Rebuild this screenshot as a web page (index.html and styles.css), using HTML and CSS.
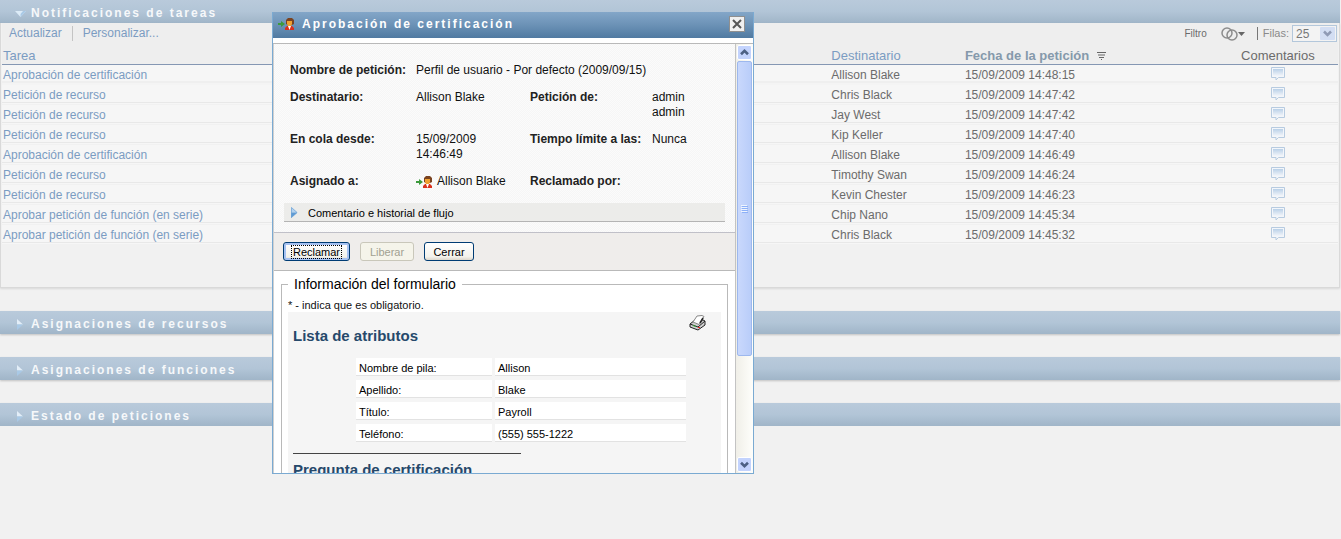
FILE: index.html
```
<!DOCTYPE html>
<html lang="es">
<head>
    <meta charset="UTF-8">
    <meta name="viewport" content="width=device-width, initial-scale=1.0">
    <title>Notificaciones de tareas</title>
    <link rel="stylesheet" href="styles.css">
</head>
<body>
    <!-- Iconos compartidos -->
    <svg class="sprite" aria-hidden="true">
        <defs>
            <linearGradient id="bubbleFill" x1="0" y1="0" x2="0" y2="1">
                <stop offset="0" stop-color="#b9d0e8"/>
                <stop offset="1" stop-color="#f3f6fa"/>
            </linearGradient>
        </defs>
        <symbol id="iconComment" viewBox="0 0 14 14">
            <path d="M.5 .5h13v10H7.500l-2.500 2.500v-2.500H.5z" fill="#f3f6fa" stroke="#b7cbe0"/>
            <rect x="2" y="2" width="10" height="7" fill="url(#bubbleFill)"/>
        </symbol>
        <symbol id="iconUser" viewBox="0 0 17 14">
            <path d="M0 6h3V4l4 3-4 3V8H0z" fill="#3c9a3c"/>
            <path d="M7 13v-2l2-2h5l2 2v2z" fill="#d8301c"/>
            <path d="M10 9h3l-1.500 4z" fill="#fff"/>
            <path d="M8 5V3l2-2h4l2 2v4l-2 1h-4l-2-1z" fill="#7a4320"/>
            <path d="M9 4h5v3l-1 2h-3l-1-2z" fill="#f0a030"/>
        </symbol>
        <symbol id="iconRight" viewBox="0 0 7 11">
            <path d="M0 0l6.500 5.500H0z" fill="#b3d2ef"/>
            <path d="M0 5.500h6.500L0 11z" fill="#5f9bd4"/>
            <path d="M.5 .5l5.500 5L.5 10.500z" fill="none" stroke="#6fa3d6" stroke-width=".7"/>
        </symbol>
    </svg>

    <main class="page">
        <section class="panel">
            <h2 class="panel-title">
                <svg class="panel-arrow" viewBox="0 0 11 11"><path d="M0 3h11L5.500 9z" fill="#dcebf7"/><path d="M5.500 9L11 3H8L5.500 6z" fill="#a9c9e6"/></svg>
                Notificaciones de tareas
            </h2>
            <div class="panel-body">
                <div class="toolbar">
                    <a href="#" class="tool-link">Actualizar</a>
                    <a href="#" class="tool-link">Personalizar...</a>
                    <div class="tool-right">
                        <span class="filter-label">Filtro</span>
                        <button class="filter-btn" type="button" aria-label="Filtro">
                            <svg width="25" height="14" viewBox="0 0 25 14">
                                <circle cx="6" cy="6" r="5" fill="none" stroke="#8c8c8c" stroke-width="1.500"/>
                                <circle cx="11" cy="8" r="5" fill="none" stroke="#8c8c8c" stroke-width="1.500"/>
                                <path d="M17 5h7l-3.500 4z" fill="#666"/>
                            </svg>
                        </button>
                        <label class="rows-label" for="rows">Filas:</label>
                        <span class="rows-box">
                            <select id="rows" class="rows-select">
                                <option>25</option>
                            </select>
                            <svg class="rows-arrow" viewBox="0 0 15 13"><rect width="15" height="13" rx="1" fill="#d3def3"/><path d="M4 4.500l3.500 3.500L11 4.500" fill="none" stroke="#909bb5" stroke-width="2.500"/></svg>
                        </span>
                    </div>
                </div>
                <table class="tasks">
                    <colgroup>
                        <col class="col-task">
                        <col class="col-to">
                        <col class="col-date">
                        <col class="col-comments">
                    </colgroup>
                    <thead>
                        <tr>
                            <th><a href="#">Tarea</a></th>
                            <th><a href="#">Destinatario</a></th>
                            <th class="sorted">Fecha de la petición
                                <svg class="sort-icon" width="9" height="8" viewBox="0 0 9 8"><path d="M0 .5h9M1 3h7M2 5.500h5M4 7.500h1" stroke="#666"/></svg>
                            </th>
                            <th class="center">Comentarios</th>
                        </tr>
                    </thead>
                    <tbody>
                        <tr><td><a href="#">Aprobación de certificación</a></td><td>Allison Blake</td><td>15/09/2009 14:48:15</td><td class="center"><svg class="comment"><use href="#iconComment"/></svg></td></tr>
                        <tr><td><a href="#">Petición de recurso</a></td><td>Chris Black</td><td>15/09/2009 14:47:42</td><td class="center"><svg class="comment"><use href="#iconComment"/></svg></td></tr>
                        <tr><td><a href="#">Petición de recurso</a></td><td>Jay West</td><td>15/09/2009 14:47:42</td><td class="center"><svg class="comment"><use href="#iconComment"/></svg></td></tr>
                        <tr><td><a href="#">Petición de recurso</a></td><td>Kip Keller</td><td>15/09/2009 14:47:40</td><td class="center"><svg class="comment"><use href="#iconComment"/></svg></td></tr>
                        <tr><td><a href="#">Aprobación de certificación</a></td><td>Allison Blake</td><td>15/09/2009 14:46:49</td><td class="center"><svg class="comment"><use href="#iconComment"/></svg></td></tr>
                        <tr><td><a href="#">Petición de recurso</a></td><td>Timothy Swan</td><td>15/09/2009 14:46:24</td><td class="center"><svg class="comment"><use href="#iconComment"/></svg></td></tr>
                        <tr><td><a href="#">Petición de recurso</a></td><td>Kevin Chester</td><td>15/09/2009 14:46:23</td><td class="center"><svg class="comment"><use href="#iconComment"/></svg></td></tr>
                        <tr><td><a href="#">Aprobar petición de función (en serie)</a></td><td>Chip Nano</td><td>15/09/2009 14:45:34</td><td class="center"><svg class="comment"><use href="#iconComment"/></svg></td></tr>
                        <tr><td><a href="#">Aprobar petición de función (en serie)</a></td><td>Chris Black</td><td>15/09/2009 14:45:32</td><td class="center"><svg class="comment"><use href="#iconComment"/></svg></td></tr>
                    </tbody>
                </table>
            </div>
        </section>

        <h2 class="panel-title closed">
            <svg class="panel-arrow" viewBox="0 0 11 11"><path d="M2 0l6 5.500H2z" fill="#e3eef8"/><path d="M2 5.500h6L2 11z" fill="#a9c9e6"/></svg>
            Asignaciones de recursos
        </h2>
        <h2 class="panel-title closed">
            <svg class="panel-arrow" viewBox="0 0 11 11"><path d="M2 0l6 5.500H2z" fill="#e3eef8"/><path d="M2 5.500h6L2 11z" fill="#a9c9e6"/></svg>
            Asignaciones de funciones
        </h2>
        <h2 class="panel-title closed">
            <svg class="panel-arrow" viewBox="0 0 11 11"><path d="M2 0l6 5.500H2z" fill="#e3eef8"/><path d="M2 5.500h6L2 11z" fill="#a9c9e6"/></svg>
            Estado de peticiones
        </h2>
    </main>

    <!-- Ventana de detalle de la tarea -->
    <div class="modal" role="dialog" aria-labelledby="modalTitle">
        <div class="modal-header">
            <svg class="user-icon"><use href="#iconUser"/></svg>
            <h1 class="modal-title" id="modalTitle">Aprobación de certificación</h1>
            <button class="close-btn" type="button" aria-label="Cerrar ventana">
                <svg width="10" height="10" viewBox="0 0 10 10"><path d="M1 1l8 8M9 1L1 9" stroke="#555" stroke-width="2"/></svg>
            </button>
        </div>
        <div class="modal-main">
            <div class="modal-content">
                <div class="detail">
                    <dl class="detail-grid">
                        <dt>Nombre de petición:</dt>
                        <dd class="wide">Perfil de usuario - Por defecto (2009/09/15)</dd>
                        <dt>Destinatario:</dt>
                        <dd>Allison Blake</dd>
                        <dt>Petición de:</dt>
                        <dd>admin<br>admin</dd>
                        <dt>En cola desde:</dt>
                        <dd>15/09/2009<br>14:46:49</dd>
                        <dt>Tiempo límite a las:</dt>
                        <dd>Nunca</dd>
                        <dt>Asignado a:</dt>
                        <dd class="with-icon"><svg class="user-icon"><use href="#iconUser"/></svg>Allison Blake</dd>
                        <dt>Reclamado por:</dt>
                        <dd></dd>
                    </dl>
                    <button class="history" type="button">
                        <svg class="history-arrow"><use href="#iconRight"/></svg>
                        Comentario e historial de flujo
                    </button>
                </div>

                <div class="actions">
                    <button class="btn btn-focus" type="button"><span class="btn-text">Reclamar</span></button>
                    <button class="btn btn-medium" type="button" disabled>Liberar</button>
                    <button class="btn" type="button">Cerrar</button>
                </div>

                <fieldset class="form-info">
                    <legend>Información del formulario</legend>
                    <p class="required">* - indica que es obligatorio.</p>
                    <div class="form-box">
                        <button class="print-btn" type="button" aria-label="Imprimir">
                            <svg width="17" height="16" viewBox="0 0 17 16">
                                <path d="M1 9l5-4h8l2 1v4l-7 5-8-3z" fill="#d0d0d0" stroke="#222"/>
                                <path d="M1 9l8 3 7-6" fill="none" stroke="#222"/>
                                <path d="M4 7l4-6 5-.500 2 1-5 8z" fill="#fff" stroke="#888"/>
                                <path d="M11 8l3-5" stroke="#222" stroke-width="1.500"/>
                                <path d="M4 10.500l3 1" stroke="#3a3"/>
                                <rect x="9" y="12" width="2" height="1" fill="#e22"/>
                            </svg>
                        </button>
                        <h3>Lista de atributos</h3>
                        <table class="attributes">
                            <tr><th scope="row">Nombre de pila:</th><td>Allison</td></tr>
                            <tr><th scope="row">Apellido:</th><td>Blake</td></tr>
                            <tr><th scope="row">Título:</th><td>Payroll</td></tr>
                            <tr><th scope="row">Teléfono:</th><td>(555) 555-1222</td></tr>
                        </table>
                        <hr>
                        <h3>Pregunta de certificación</h3>
                    </div>
                </fieldset>
            </div>
            <div class="scrollbar" aria-hidden="true">
                <svg class="scroll-btn" viewBox="0 0 15 15"><path d="M3.500 9.500L7.500 5.500l4 4" fill="none" stroke="#4d6185" stroke-width="3"/></svg>
                <div class="scroll-thumb">
                    <svg width="7" height="8" viewBox="0 0 7 8"><path d="M0 .5h6M0 2.500h6M0 4.500h6M0 6.500h6" stroke="#eef4fe"/><path d="M1 1.500h6M1 3.500h6M1 5.500h6M1 7.500h6" stroke="#8cb0f8"/></svg>
                </div>
                <svg class="scroll-btn scroll-down" viewBox="0 0 15 15"><path d="M3.500 5.500l4 4 4-4" fill="none" stroke="#4d6185" stroke-width="3"/></svg>
            </div>
        </div>
    </div>
</body>
</html>
```
FILE: styles.css
```
/* Estilos generales */
* {
    box-sizing: border-box;
}

body {
    margin: 0;
    background: #f1f1f1;
    font-family: "Liberation Sans", Arial, sans-serif;
    font-size: 12px;
    line-height: 15px;
    color: #6b6b6b;
}

a {
    color: #7b9cc2;
    text-decoration: none;
}

button {
    font-family: inherit;
    padding: 0;
}

svg {
    flex: none;
}

.sprite {
    position: absolute;
    width: 0;
    height: 0;
}

.page {
    margin-right: 1px;
}

/* Paneles */
.panel-title {
    display: flex;
    align-items: center;
    gap: 5px;
    height: 23px;
    margin: 0;
    padding: 3px 0 0 15px;
    background: linear-gradient(#b9cadb, #b2c5d7 50%, #a0b5c8);
    color: #f6f8fa;
    font-size: 12px;
    letter-spacing: 2px;
}

.panel-title.closed {
    margin-top: 23px;
    box-shadow: 0 1px 2px rgba(0, 0, 0, 0.2);
}

.panel-arrow {
    width: 11px;
    height: 11px;
}

.panel-body {
    min-height: 265px;
    border: 1px solid #d9d9d9;
    border-top: none;
    box-shadow: 0 1px 2px rgba(0, 0, 0, 0.1);
    margin-bottom: 23px;
    padding: 0 1px;
}

.toolbar {
    display: flex;
    align-items: center;
    height: 21px;
    background: #eeeeee;
}

.tool-link {
    padding: 0 10px 0 7px;
}

.tool-link + .tool-link {
    border-left: 1px solid #c4c4c4;
    padding-left: 10px;
}

.tool-right {
    display: flex;
    align-items: center;
    margin-left: auto;
    font-size: 11px;
}

.filter-btn {
    display: flex;
    margin: 0 11px 0 14px;
    border: none;
    background: none;
}

.filter-label {
    font-size: 10px;
}

.rows-label {
    border-left: 1px solid #777;
    padding: 0 3px 0 5px;
    line-height: 13px;
    color: #8a8a8a;
}

.rows-box {
    display: grid;
    align-items: center;
    width: 45px;
    height: 17px;
    margin-right: 1px;
    border: 1px solid #b3c7db;
    background: #f3f3f3;
}

.rows-select {
    grid-area: 1 / 1;
    width: 100%;
    appearance: none;
    border: none;
    background: none;
    padding: 0 3px;
    color: #777;
    font-family: inherit;
    font-size: 12px;
}

.rows-arrow {
    grid-area: 1 / 1;
    justify-self: end;
    width: 15px;
    height: 13px;
    margin-right: 1px;
    pointer-events: none;
}

/* Tabla de tareas */
.tasks {
    width: 100%;
    table-layout: fixed;
    border-collapse: collapse;
}

.col-task { width: 62%; }
.col-to { width: 10%; }
.col-date { width: 19%; }
.col-comments { width: 9%; }

.tasks th {
    height: 20px;
    padding: 3px 1px 0;
    border-bottom: 1px solid #8597b3;
    background: #eeeeee;
    font-size: 13px;
    font-weight: normal;
    text-align: left;
}

.tasks .sorted {
    color: #8599ab;
    font-weight: bold;
}

.sort-icon {
    margin-left: 4px;
}

.tasks td {
    height: 20px;
    padding: 2px 1px 0;
    background: linear-gradient(#f6f6f6 17px, #e8e8e8 17px, #e8e8e8 18px, #f6f6f6 18px, #f6f6f6 19px, #f1f1f1 19px);
}

.tasks .center {
    text-align: center;
}

.comment {
    display: block;
    width: 14px;
    height: 14px;
    margin: 0 auto 4px;
}

/* Ventana */
.modal {
    position: absolute;
    top: 12px;
    left: 272px;
    display: flex;
    flex-direction: column;
    width: 482px;
    height: 462px;
    border: 1px solid #7aaad2;
    border-top: none;
    background: #fff;
    color: #111;
}

.modal-header {
    display: flex;
    align-items: center;
    flex: none;
    height: 26px;
    padding: 0 8px 2px 5px;
    background: linear-gradient(#83a6c8, #6e94b8 45%, #507aa1);
}

.user-icon {
    width: 17px;
    height: 14px;
}

.modal-title {
    margin: 0 0 0 7px;
    color: #fff;
    font-size: 12px;
    letter-spacing: 2px;
}

.close-btn {
    display: grid;
    place-items: center;
    width: 16px;
    height: 16px;
    margin-left: auto;
    border: 1px solid #8f8f8f;
    background: #f0f0f0;
}

.modal-main {
    display: flex;
    flex: 1;
    min-height: 0;
    margin-top: 5px;
    border-top: 1px solid #b9b9b9;
}

.modal-content {
    flex: 1;
    overflow: hidden;
    border-left: 1px solid #d0d0d0;
    border-right: 1px solid #c3c3c3;
}

.detail {
    padding: 19px 10px 10px;
    background: conic-gradient(#f6f6f6 25%, #fbfbfb 0 50%, #f6f6f6 0 75%, #fbfbfb 0) 0 0 / 2px 2px;
}

.detail-grid {
    display: grid;
    grid-template-columns: 126px 114px 122px 1fr;
    row-gap: 12px;
    margin: 0 0 14px 6px;
}

.detail-grid dt {
    font-weight: bold;
    color: #222;
}

.detail-grid dd {
    margin: 0;
}

.detail-grid .wide {
    grid-column: span 3;
}

.with-icon {
    display: flex;
    align-items: center;
    gap: 4px;
}

.history {
    display: flex;
    align-items: center;
    gap: 10px;
    width: 100%;
    height: 19px;
    padding: 1px 7px 0;
    border: none;
    border-bottom: 1px solid #b4b4b4;
    background: #ececea;
    color: #000;
    font-size: 11px;
}

.history-arrow {
    width: 7px;
    height: 11px;
}

.actions {
    display: flex;
    gap: 10px;
    padding: 9px;
    border-top: 1px solid #c0c0c8;
    border-bottom: 1px solid #b9b9b9;
    background: #efedeb;
}

.btn {
    width: 50px;
    height: 19px;
    border: 1px solid #003c74;
    border-radius: 3px;
    background: linear-gradient(#fff, #f3f2ec 80%, #dcd7cc);
    color: #000;
    font-size: 11px;
}

.btn-focus {
    width: 67px;
    padding: 0 2px;
    box-shadow: inset 0 0 0 2px #a6c2f2;
}

.btn-text {
    display: block;
    margin: 0 5px;
    border: 1px dotted #000;
    line-height: 12px;
}

.btn-medium {
    width: 54px;
}

.btn:disabled {
    border-color: #c9c7ba;
    background: #f5f4ea;
    color: #a1a192;
}

/* Formulario */
.form-info {
    margin: 4px 7px 0;
    padding: 0 6px 20px;
    border: 1px solid #b9b9b9;
}

.form-info legend {
    padding: 0 6px;
    font-size: 14px;
    line-height: 18px;
    color: #000;
}

.required {
    margin: 6px 0 0;
    font-size: 11px;
    line-height: 13px;
}

.form-box {
    padding: 3px 5px 20px;
    background: #f5f5f5;
}

.print-btn {
    float: right;
    margin: 0 10px 0 0;
    border: none;
    background: none;
}

.form-box h3 {
    margin: 0;
    padding-top: 12px;
    color: #26496b;
    font-size: 15px;
    line-height: 18px;
}

.attributes {
    margin: 9px 0 0 60px;
    border-spacing: 3px 4px;
    color: #000;
    font-size: 11px;
    line-height: 14px;
}

.attributes th,
.attributes td {
    height: 18px;
    padding: 3px 3px 0;
    border-bottom: 1px solid #e2e2e2;
    background: #fff;
    font-weight: normal;
    text-align: left;
}

.attributes th {
    width: 136px;
}

.attributes td {
    width: 191px;
}

.form-box hr {
    width: 228px;
    height: 1px;
    margin: 7px 0 0;
    border: none;
    background: #444;
}

.form-box hr + h3 {
    padding-top: 7px;
}

/* Barra de desplazamiento */
.scrollbar {
    display: flex;
    flex-direction: column;
    width: 17px;
    padding: 1px;
    background: linear-gradient(to right, #f0efe8, #fefefb);
}

.scroll-btn {
    width: 15px;
    height: 15px;
    border: 1px solid #fff;
    border-radius: 2px;
    background: #c3d3fd;
}

.scroll-down {
    margin-top: auto;
}

.scroll-thumb {
    display: grid;
    place-items: center;
    height: 295px;
    margin-top: 1px;
    border: 1px solid #9db8ee;
    border-radius: 2px;
    background: linear-gradient(to right, #c9d8fc, #b9cdf9);
}
```
